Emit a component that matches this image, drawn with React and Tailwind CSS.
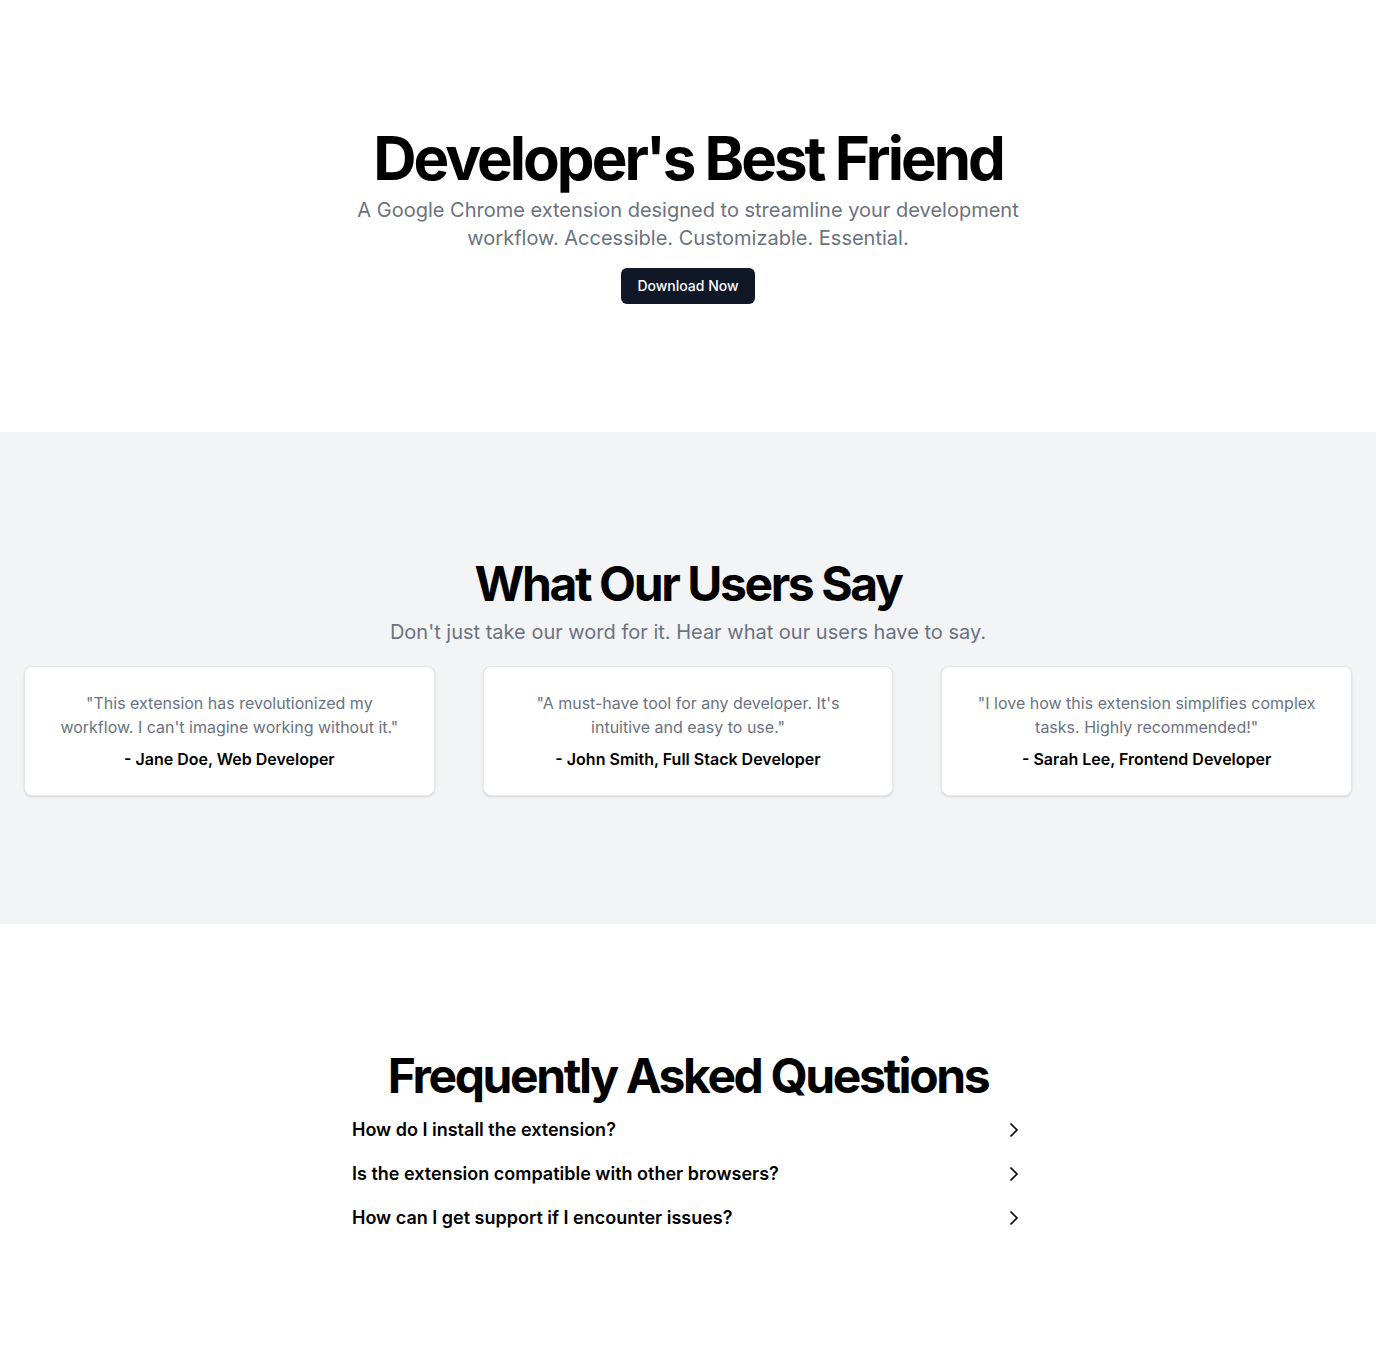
import React from 'react';
import { ChevronRight } from 'lucide-react';

const testimonials = [
    { quote: '"This extension has revolutionized my workflow. I can\'t imagine working without it."', author: '- Jane Doe, Web Developer' },
    { quote: '"A must-have tool for any developer. It\'s intuitive and easy to use."', author: '- John Smith, Full Stack Developer' },
    { quote: '"I love how this extension simplifies complex tasks. Highly recommended!"', author: '- Sarah Lee, Frontend Developer' },
];

const faqs = [
    'How do I install the extension?',
    'Is the extension compatible with other browsers?',
    'How can I get support if I encounter issues?',
];

export default function App() {
    return (
        <div className="min-h-screen bg-white font-['Inter',sans-serif]">
            {/* Hero */}
            <section className="py-32 px-6">
                <div className="flex flex-col items-center text-center">
                    <h1 className="text-6xl font-bold tracking-tighter text-black">Developer's Best Friend</h1>
                    <p className="mt-2 max-w-[700px] text-xl text-gray-500">
                        A Google Chrome extension designed to streamline your development workflow. Accessible. Customizable. Essential.
                    </p>
                    <button className="mt-4 h-9 rounded-md bg-gray-900 px-4 text-sm font-medium text-white">
                        Download Now
                    </button>
                </div>
            </section>

            {/* Testimonials */}
            <section className="bg-gray-100 py-32 px-6">
                <div className="flex flex-col items-center text-center">
                    <h2 className="text-5xl font-bold tracking-tighter text-black">What Our Users Say</h2>
                    <p className="mt-[10px] text-xl text-gray-500">Don't just take our word for it. Hear what our users have to say.</p>
                </div>
                <div className="mt-5 grid grid-cols-3 gap-12">
                    {testimonials.map((t) => (
                        <div key={t.author} className="rounded-lg border border-gray-200 bg-white p-6 text-center shadow-sm">
                            <p className="text-base text-gray-500">{t.quote}</p>
                            <p className="mt-2 font-semibold text-black">{t.author}</p>
                        </div>
                    ))}
                </div>
            </section>

            {/* FAQ */}
            <section className="py-32 px-6">
                <div className="mx-auto max-w-2xl">
                    <h2 className="text-center text-5xl font-bold tracking-tighter text-black">Frequently Asked Questions</h2>
                    <div className="mt-2">
                        {faqs.map((q) => (
                            <div key={q} className="flex items-center justify-between py-2">
                                <span className="text-lg font-semibold text-black">{q}</span>
                                <ChevronRight className="-mr-0.5 h-6 w-6 text-black" strokeWidth={1.75} />
                            </div>
                        ))}
                    </div>
                </div>
            </section>
        </div>
    );
}
